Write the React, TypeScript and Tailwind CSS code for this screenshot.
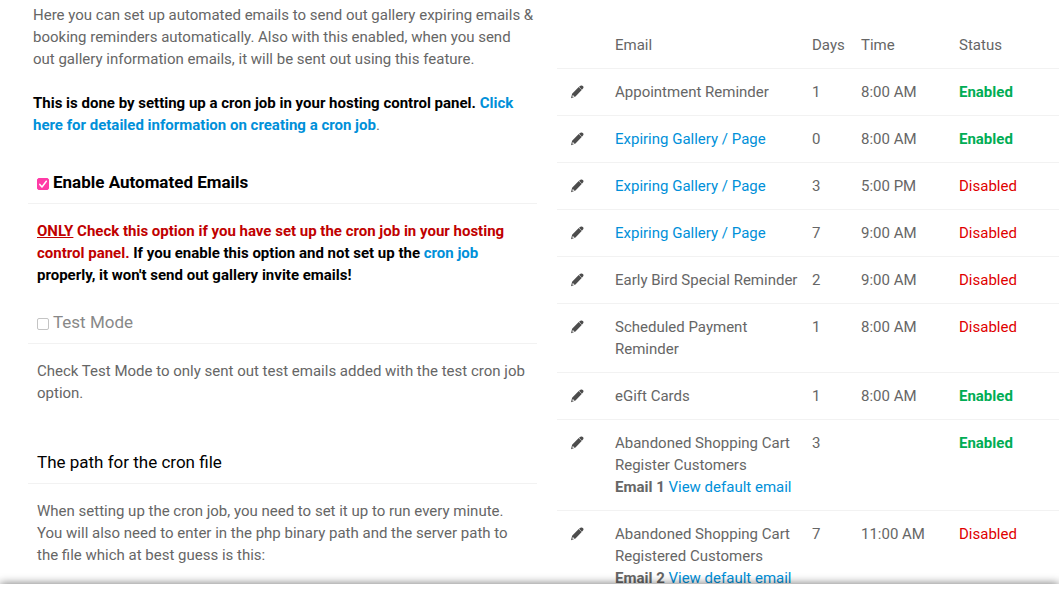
import type { ReactNode } from 'react'

type Row = {
  name: ReactNode
  label: string
  days: number
  time: string
  enabled: boolean
}

const linkClass = 'text-[#0090d9]'

const galleryLink = (
  <a href="#gallery" className={linkClass}>
    Expiring Gallery / Page
  </a>
)

function CartEmail({ title, email }: { title: string; email: string }) {
  return (
    <>
      {title}
      <br />
      <b>{email}</b>{' '}
      <a href="#default" className={linkClass}>
        View default email
      </a>
    </>
  )
}

const rows: Row[] = [
  { label: 'Appointment Reminder', name: 'Appointment Reminder', days: 1, time: '8:00 AM', enabled: true },
  { label: 'Expiring Gallery', name: galleryLink, days: 0, time: '8:00 AM', enabled: true },
  { label: 'Expiring Gallery', name: galleryLink, days: 3, time: '5:00 PM', enabled: false },
  { label: 'Expiring Gallery', name: galleryLink, days: 7, time: '9:00 AM', enabled: false },
  { label: 'Early Bird Special Reminder', name: 'Early Bird Special Reminder', days: 2, time: '9:00 AM', enabled: false },
  { label: 'Scheduled Payment Reminder', name: 'Scheduled Payment Reminder', days: 1, time: '8:00 AM', enabled: false },
  { label: 'eGift Cards', name: 'eGift Cards', days: 1, time: '8:00 AM', enabled: true },
  {
    label: 'Abandoned Cart 1',
    name: <CartEmail title="Abandoned Shopping Cart Register Customers" email="Email 1" />,
    days: 3,
    time: '',
    enabled: true,
  },
  {
    label: 'Abandoned Cart 2',
    name: <CartEmail title="Abandoned Shopping Cart Registered Customers" email="Email 2" />,
    days: 7,
    time: '11:00 AM',
    enabled: false,
  },
]

function PencilIcon() {
  return (
    <svg viewBox="0 0 13 14" className="w-[13px] h-[14px]" fill="#4d4d4d" aria-hidden="true">
      {/* Eraser cap */}
      <path d="M8 1.8 9.5 0.7C10.3 0.2 11.3 0.3 11.9 1L12.1 1.3C12.7 2.1 12.6 3 12 3.6L10.9 4.8Z" />
      {/* Barrel and tip */}
      <path
        fillRule="evenodd"
        d="M7.7 2 10.7 5 4.5 11.6 0 13.2 1.1 8.7ZM1.8 9.9 1.3 11.4 2 12.1 3.6 11.5Z"
      />
    </svg>
  )
}

function CheckHeading({ id, label, checked, className }: { id: string; label: string; checked?: boolean; className: string }) {
  return (
    <h2 className={`flex items-center gap-1 border-b border-[#f2f2f2] px-[9px] pb-[9px] text-[17px] leading-6 ${className}`}>
      <span className="relative mt-1 flex">
        <input
          id={id}
          type="checkbox"
          defaultChecked={checked}
          className="peer size-3 appearance-none rounded-[2px] border border-[#c4c4c4] bg-white checked:border-[#ff3ba7] checked:bg-[#ff3ba7]"
        />
        <svg
          viewBox="0 0 12 12"
          className="pointer-events-none absolute inset-0 hidden size-3 peer-checked:block"
          fill="none"
          stroke="white"
          strokeWidth="1.5"
          strokeLinecap="round"
          strokeLinejoin="round"
          aria-hidden="true"
        >
          <path d="M2.8 6.4 5 9 9.3 3.2" />
        </svg>
      </span>
      <label htmlFor={id}>{label}</label>
    </h2>
  )
}

function Settings() {
  return (
    <section>
      <p className="pr-0.5 pl-[5px]">
        Here you can set up automated emails to send out gallery expiring emails &amp; booking reminders automatically.
        Also with this enabled, when you send out gallery information emails, it will be sent out using this feature.
      </p>
      <p className="mt-[22px] pr-0.5 pl-[5px]">
        <b className="text-black">This is done by setting up a cron job in your hosting control panel.</b>{' '}
        <a href="#cron" className="font-bold text-[#0090d9]">
          Click here for detailed information on creating a cron job
        </a>
        .
      </p>

      <CheckHeading id="enable" label="Enable Automated Emails" checked className="mt-[34px] font-bold text-black" />
      <p className="px-[9px] pt-4 font-bold text-black">
        <span className="text-[#c00000]">
          <u>ONLY</u> Check this option if you have set up the cron job in your hosting control panel.
        </span>{' '}
        If you enable this option and not set up the{' '}
        <a href="#cron" className={linkClass}>
          cron job
        </a>{' '}
        properly, it won't send out gallery invite emails!
      </p>

      <CheckHeading id="test" label="Test Mode" className="mt-6 text-[#888]" />
      <p className="px-[9px] pt-4">Check Test Mode to only sent out test emails added with the test cron job option.</p>

      <h2 className="mt-[46px] border-b border-[#f2f2f2] px-[9px] pb-[9px] text-[17px] leading-6 text-black">
        The path for the cron file
      </h2>
      <p className="px-[9px] pt-4">
        When setting up the cron job, you need to set it up to run every minute. You will also need to enter in the php
        binary path and the server path to the file which at best guess is this:
      </p>
    </section>
  )
}

function EmailTable() {
  return (
    <table className="mt-[18px] w-full table-fixed border-collapse text-left">
      <colgroup>
        <col className="w-[44px]" />
        <col />
        <col className="w-[49px]" />
        <col className="w-[98px]" />
        <col className="w-[114px]" />
      </colgroup>
      <thead>
        <tr className="border-b border-[#f2f2f2]">
          <td />
          <th className="py-3 pl-3.5 font-normal">Email</th>
          <th className="py-3 pl-3.5 font-normal">Days</th>
          <th className="py-3 pl-3.5 font-normal">Time</th>
          <th className="py-3 pl-3.5 font-normal">Status</th>
        </tr>
      </thead>
      <tbody>
        {rows.map((row, idx) => (
          <tr key={idx} className="border-b border-[#f2f2f2] align-top">
            <td className="py-3 pl-3.5">
              <button type="button" aria-label={`Edit ${row.label}`} className="flex h-[22px] cursor-pointer items-center">
                <PencilIcon />
              </button>
            </td>
            <td className="py-3 pl-3.5">{row.name}</td>
            <td className="py-3 pl-3.5">{row.days}</td>
            <td className="py-3 pl-3.5">{row.time}</td>
            <td className="py-3 pl-3.5">
              {row.enabled ? (
                <span className="font-bold text-[#00ad54]">Enabled</span>
              ) : (
                <span className="text-[#e00000]">Disabled</span>
              )}
            </td>
          </tr>
        ))}
      </tbody>
    </table>
  )
}

export default function App() {
  return (
    <div className="flex h-screen flex-col overflow-hidden bg-white font-['Roboto',sans-serif] text-[15px] leading-[22px] text-[#666]">
      <main className="grid min-h-0 flex-1 grid-cols-[509fr_502fr] items-start gap-5 overflow-hidden pt-1 pl-7">
        <Settings />
        <EmailTable />
      </main>
      {/* Bottom bar */}
      <footer className="relative h-2 shrink-0 bg-white shadow-[0_0_10px_rgba(0,0,0,0.6)]" />
    </div>
  )
}
